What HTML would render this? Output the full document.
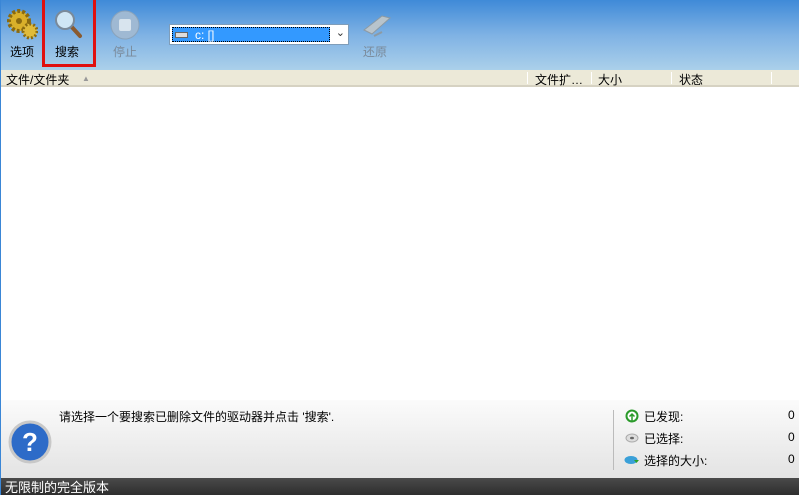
<!DOCTYPE html>
<html><head><meta charset="utf-8"><style>
*{margin:0;padding:0;box-sizing:border-box}
body{width:799px;height:495px;overflow:hidden;position:relative;font-family:"Liberation Sans","Noto Sans CJK SC",sans-serif;font-size:12px;background:#fff}
.tb{position:absolute;left:0;top:0;width:799px;height:70px;background:linear-gradient(#3f8ad8,#7fb2e4 50%,#abd0ea)}
.lbl{position:absolute;top:43px;font-size:12px;color:#000}
.hdr{position:absolute;left:0;top:70px;width:799px;height:17px;background:#ece9d8;border-bottom:2px solid #d6d2c2}
.hdr span{position:absolute;top:1px;font-size:12px}
.sep{position:absolute;top:2px;width:1px;height:12px;background:#c7c5b7;border-right:1px solid #fff}
.bp{position:absolute;left:0;top:400px;width:799px;height:78px;background:linear-gradient(#fbfbfb,#e3e3e3)}
.sb{position:absolute;left:0;top:478px;width:799px;height:17px;background:linear-gradient(#4a4a4a,#2e2e2e);color:#fff;font-size:13px;padding-left:5px;line-height:20px}
.st{position:absolute;font-size:12px}
</style></head><body>
<div style="position:absolute;left:0;top:0;width:1px;height:495px;background:#3a86d6;z-index:5"></div>
<div class="tb">
 <svg style="position:absolute;left:6px;top:8px" width="32" height="32"><circle cx="13" cy="13" r="10" fill="#d9b02a" stroke="#8a6a10" stroke-dasharray="3 2" stroke-width="4"/><circle cx="13" cy="13" r="3" fill="#8a6a10"/><circle cx="24" cy="23" r="7" fill="#e0bb3a" stroke="#8a6a10" stroke-dasharray="2 2" stroke-width="3"/></svg>
 <div class="lbl" style="left:10px">选项</div>
 <div style="position:absolute;left:42px;top:0;width:54px;height:67px;border:3px solid #e01010;border-top:none"></div>
 <svg style="position:absolute;left:53px;top:8px" width="32" height="32"><line x1="17" y1="17" x2="27" y2="28" stroke="#8a5a30" stroke-width="4" stroke-linecap="round"/><circle cx="12" cy="12" r="9" fill="#cfe6f5" stroke="#7a8a9a" stroke-width="2"/></svg>
 <div class="lbl" style="left:55px">搜索</div>
 <svg style="position:absolute;left:110px;top:10px" width="30" height="30"><circle cx="15" cy="15" r="14" fill="#9fb9d3" stroke="#8aa3bb"/><rect x="9" y="9" width="12" height="12" rx="2" fill="#d8e4ee"/></svg>
 <div class="lbl" style="left:113px;color:#7a8a9a">停止</div>
 <div style="position:absolute;left:169px;top:24px;width:180px;height:21px;background:#fff;border:1px solid #7f9db9">
  <div style="position:absolute;left:2px;top:2px;width:158px;height:15px;background:#3399ff;border:1px dotted #000;color:#fff;font-size:12px;padding-left:22px;line-height:14px">c: []</div>
  <div style="position:absolute;left:5px;top:7px;width:13px;height:6px;background:#ddd;border:1px solid #666"></div>
  <div style="position:absolute;right:3px;top:1px;font-size:11px;color:#333">⌄</div>
 </div>
 <svg style="position:absolute;left:360px;top:10px" width="32" height="30"><path d="M4 20 L22 6 L30 8 L12 24 Z" fill="#b8c4cc" stroke="#8d9aa3"/><path d="M14 26 l8 -4" stroke="#8d9aa3" stroke-width="2"/></svg>
 <div class="lbl" style="left:363px;color:#7a8a9a">还原</div>
</div>
<div class="hdr">
 <span style="left:6px">文件/文件夹</span><span style="left:82px;font-size:8px;top:4px;color:#999">▲</span>
 <div class="sep" style="left:527px"></div><span style="left:535px">文件扩…</span>
 <div class="sep" style="left:591px"></div><span style="left:598px">大小</span>
 <div class="sep" style="left:671px"></div><span style="left:679px">状态</span>
 <div class="sep" style="left:771px"></div>
</div>
<div class="bp">
 <div class="st" style="left:59px;top:8px">请选择一个要搜索已删除文件的驱动器并点击 '搜索'.</div>
 <svg style="position:absolute;left:8px;top:20px" width="44" height="44"><circle cx="22" cy="22" r="20" fill="#2d6bc8" stroke="#c8c8c8" stroke-width="3"/><text x="22" y="31" text-anchor="middle" font-size="26" font-weight="bold" fill="#fff" font-family="Liberation Sans">?</text></svg>
 <div style="position:absolute;left:613px;top:10px;width:1px;height:60px;background:#bbb"></div>
 <svg style="position:absolute;left:625px;top:9px" width="14" height="14"><circle cx="7" cy="7" r="5.5" fill="#fff" stroke="#2a9a2a" stroke-width="2"/><path d="M7 12V5M4.5 7.5 7 5 9.5 7.5" stroke="#2a9a2a" stroke-width="1.5" fill="none"/></svg>
 <div class="st" style="left:644px;top:8px">已发现:</div><div class="st" style="left:788px;top:8px">0</div>
 <svg style="position:absolute;left:625px;top:33px" width="14" height="10"><ellipse cx="7" cy="5" rx="6" ry="4" fill="#ddd" stroke="#aaa"/><ellipse cx="7" cy="5" rx="2" ry="1.3" fill="#666"/></svg>
 <div class="st" style="left:644px;top:30px">已选择:</div><div class="st" style="left:788px;top:30px">0</div>
 <svg style="position:absolute;left:624px;top:54px" width="16" height="12"><ellipse cx="7" cy="6" rx="6.5" ry="4" fill="#3aa0d8"/><path d="M10 6h5l-2.5 3z" fill="#2aa02a"/></svg>
 <div class="st" style="left:644px;top:52px">选择的大小:</div><div class="st" style="left:788px;top:52px">0</div>
</div>
<div class="sb">无限制的完全版本</div>
</body></html>
